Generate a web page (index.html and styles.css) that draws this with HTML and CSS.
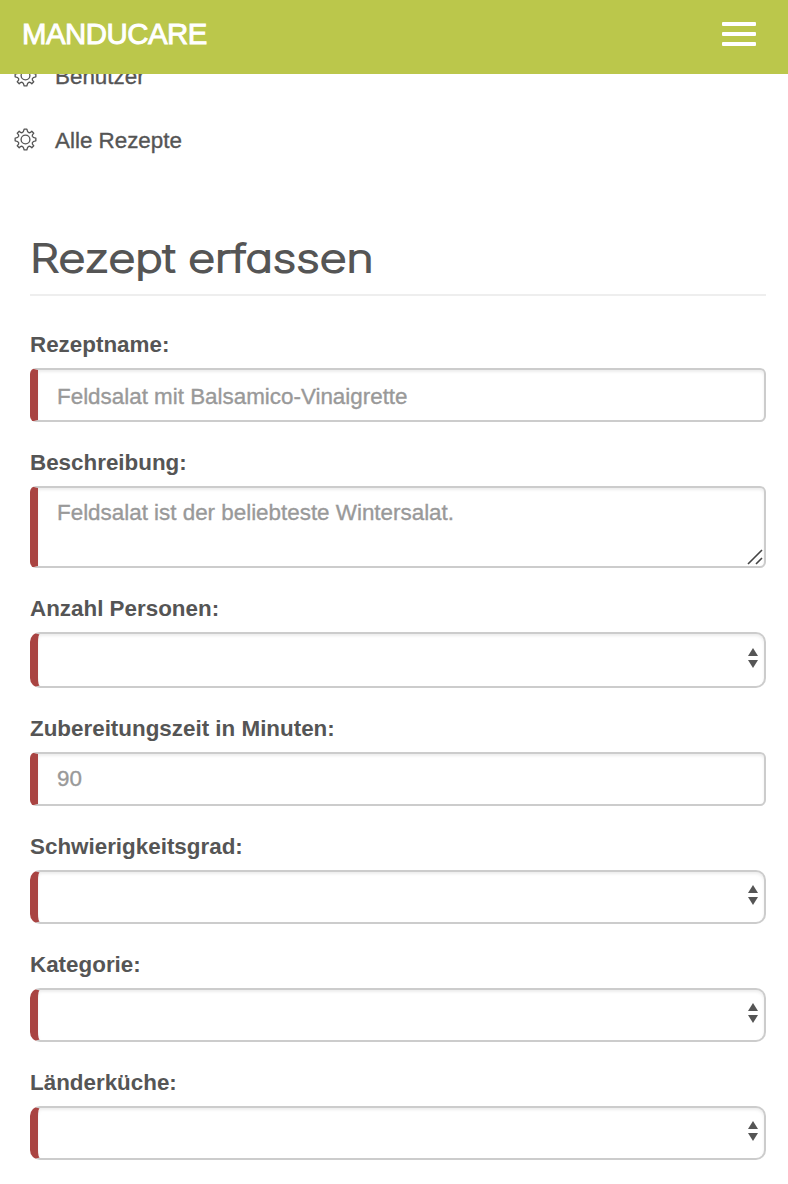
FILE: index.html
```html
<!DOCTYPE html>
<html lang="de">
<head>
<meta charset="utf-8">
<title>Manducare</title>
<link rel="stylesheet" href="styles.css">
</head>
<body>
<svg class="defs" width="0" height="0" aria-hidden="true">
  <symbol id="gear" viewBox="0 0 24 24">
    <path d="M10.6 1.2H13.4Q14 4.4 15.4 4.9Q17 5.3 18.6 3.4L20.6 5.4Q18.6 7.2 19.1 8.6Q19.8 10.2 22.8 10.6V13.4Q19.8 13.8 19.1 15.4Q18.6 16.8 20.6 18.6L18.6 20.6Q17 18.7 15.4 19.1Q14 19.6 13.4 22.8H10.6Q10 19.6 8.6 19.1Q7 18.7 5.4 20.6L3.4 18.6Q5.4 16.8 4.9 15.4Q4.2 13.8 1.2 13.4V10.6Q4.2 10.2 4.9 8.6Q5.4 7.2 3.4 5.4L5.4 3.4Q7 5.3 8.6 4.9Q10 4.4 10.6 1.2Z"/>
    <circle cx="12" cy="12" r="4.6"/>
  </symbol>
  <symbol id="updown" viewBox="0 0 10 20"><path d="M5 0L10 8H0ZM0 12H10L5 20Z"/></symbol>
</svg>
<header class="navbar">
  <a class="brand">MANDUCARE</a>
  <button class="toggle" aria-label="Menü"><span></span><span></span><span></span></button>
</header>
<nav class="links">
  <a class="link"><svg class="gear"><use href="#gear"/></svg>Benutzer</a>
  <a class="link"><svg class="gear"><use href="#gear"/></svg>Alle Rezepte</a>
</nav>
<main class="content">
  <h1 class="title"><span class="title-text">Rezept erfassen</span></h1>
  <form class="form">
    <div class="group"><label class="label">Rezeptname:</label><input class="control name" placeholder="Feldsalat mit Balsamico-Vinaigrette"></div>
    <div class="group"><label class="label">Beschreibung:</label>
      <div class="wrap"><textarea class="control area" placeholder="Feldsalat ist der beliebteste Wintersalat."></textarea><svg class="grip" viewBox="0 0 16 16"><path d="M1 15L15 1M9 15L15 9"/></svg></div></div>
    <div class="group"><label class="label">Anzahl Personen:</label>
      <div class="wrap"><select class="control select tall"></select><svg class="arrows"><use href="#updown"/></svg></div></div>
    <div class="group"><label class="label">Zubereitungszeit in Minuten:</label><input class="control" placeholder="90"></div>
    <div class="group"><label class="label">Schwierigkeitsgrad:</label>
      <div class="wrap"><select class="control select"></select><svg class="arrows"><use href="#updown"/></svg></div></div>
    <div class="group"><label class="label">Kategorie:</label>
      <div class="wrap"><select class="control select"></select><svg class="arrows"><use href="#updown"/></svg></div></div>
    <div class="group"><label class="label">Länderküche:</label>
      <div class="wrap"><select class="control select"></select><svg class="arrows"><use href="#updown"/></svg></div></div>
  </form>
</main>
</body>
</html>
```
FILE: styles.css
```css
* { box-sizing: border-box; }
body {
  margin: 0;
  background: #fff;
  color: #555;
  font: 22.4px/32px "Liberation Sans", Arial, sans-serif;
  -webkit-text-stroke: 0.35px;
}
.defs { position: absolute; }
.navbar {
  position: fixed;
  inset: 0 0 auto;
  z-index: 2;
  height: 74px;
  padding: 0 32px 6px 22px;
  display: flex;
  align-items: center;
  justify-content: space-between;
  background: #bbc74b;
}
.brand { color: #fff; font-size: 29.4px; letter-spacing: -0.5px; -webkit-text-stroke: 0.9px #fff; }
.toggle {
  width: 34px;
  padding: 0;
  border: 0;
  background: none;
  display: flex;
  flex-direction: column;
  gap: 6px;
}
.toggle span { width: 34px; height: 4px; border-radius: 1px; background: #fff; }
.links { padding: 44px 0 0 14px; }
.link { display: flex; align-items: center; gap: 18px; height: 64px; padding-top: 2px; }
.gear { width: 23px; height: 23px; margin-top: -3px; fill: none; stroke: #555; stroke-width: 1.4; stroke-linejoin: round; }
.content { padding: 52px 22px 24px 30px; }
.title {
  height: 72px;
  margin: 0 0 32px;
  border-bottom: 2px solid #eee;
  font: 200 38.5px/68px Inter, "Open Sans", sans-serif;
}
.title-text {
  display: inline-block;
  transform: scaleX(1.205);
  transform-origin: left;
  font-feature-settings: "cv11";
  -webkit-text-stroke: 1.9px #555;
}
.form { display: flex; flex-direction: column; gap: 24px; }
.label { display: block; height: 32px; padding-top: 1px; margin-bottom: 8px; font-weight: bold; -webkit-text-stroke: 0; }
.wrap { position: relative; }
.control {
  display: block;
  width: 100%;
  height: 54px;
  padding: 0 19px;
  border: 2px solid #ccc;
  border-left: 8px solid #a94442;
  border-radius: 6px;
  background: #fff;
  box-shadow: inset 0 2px 3px rgba(0, 0, 0, 0.075);
  color: #555;
  font: inherit;
  appearance: none;
  outline: 0;
}
.control::placeholder { color: #999; opacity: 1; }
.name { padding-top: 3px; }
.area { height: 82px; padding-top: 9px; resize: none; overflow: hidden; }
.select { border-radius: 10px; }
.tall { height: 56px; }
.arrows { position: absolute; right: 8.5px; top: 15px; width: 10px; height: 20px; fill: #555; }
.tall + .arrows { top: 16px; }
.grip { position: absolute; right: 3px; bottom: 3px; width: 16px; height: 16px; stroke: #444; stroke-width: 1.6; }
```
